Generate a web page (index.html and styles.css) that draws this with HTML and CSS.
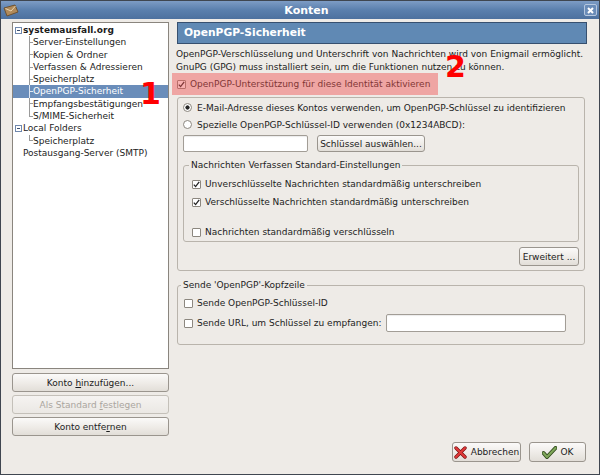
FILE: index.html
```html
<!DOCTYPE html>
<html lang="de">
<head>
    <meta charset="UTF-8">
    <title>Konten</title>
    <link rel="stylesheet" href="styles.css">
</head>
<body>
<div class="window">

    <!-- Title bar -->
    <div class="titlebar">
        <svg class="win-icon" width="16" height="13" viewBox="0 0 16 13">
            <path d="M1 4 L12 1 L15 8 L4 12 Z" fill="#b08a5a" stroke="#6e5230" stroke-width="1"/>
            <path d="M2.5 4.5 L8 7 L12.5 2" fill="none" stroke="#e8d4b0" stroke-width="1"/>
        </svg>
        <span class="title">Konten</span>
        <span class="close-btn">
            <svg width="11" height="11" viewBox="0 0 11 11">
                <path d="M3 3 L8 8 M8 3 L3 8" stroke="#fff" stroke-width="2"/>
            </svg>
        </span>
    </div>

    <div class="main">
        <!-- Account tree -->
        <div class="left">
            <div class="tree">
                <div class="row root bold"><span class="expander"></span>systemausfall.org</div>
                <div class="row child"><span class="branch"></span>Server-Einstellungen</div>
                <div class="row child"><span class="branch"></span>Kopien &amp; Ordner</div>
                <div class="row child"><span class="branch"></span>Verfassen &amp; Adressieren</div>
                <div class="row child"><span class="branch"></span>Speicherplatz</div>
                <div class="row child selected"><span class="branch"></span>OpenPGP-Sicherheit</div>
                <div class="row child"><span class="branch"></span>Empfangsbestätigungen</div>
                <div class="row child"><span class="branch last"></span>S/MIME-Sicherheit</div>
                <div class="row root"><span class="expander"></span>Local Folders</div>
                <div class="row child"><span class="branch last"></span>Speicherplatz</div>
                <div class="row root"><span class="spacer"></span>Postausgang-Server (SMTP)</div>
            </div>
            <div class="left-buttons">
                <button class="btn">Konto <u>h</u>inzufügen...</button>
                <button class="btn" disabled>Als Standard <u>f</u>estlegen</button>
                <button class="btn">Konto entfe<u>r</u>nen</button>
            </div>
        </div>

        <!-- Settings page -->
        <div class="right">
            <div class="page-header">OpenPGP-Sicherheit</div>
            <p class="desc">OpenPGP-Verschlüsselung und Unterschrift von Nachrichten wird von Enigmail ermöglicht.<br>GnuPG (GPG) muss installiert sein, um die Funktionen nutzen zu können.</p>

            <div class="check-row highlight">
                <span class="box"><svg width="7" height="7" viewBox="0 0 7 7"><path d="M0.8 3.6 L2.6 5.6 L6.2 0.8" fill="none" stroke="#222" stroke-width="1.3"/></svg></span>
                OpenPGP-Unterstützung für diese Identität aktivieren
            </div>

            <div class="frame">
                <div class="radio-row"><span class="radio on"></span>E-Mail-Adresse dieses Kontos verwenden, um OpenPGP-Schlüssel zu identifizieren</div>
                <div class="radio-row"><span class="radio"></span>Spezielle OpenPGP-Schlüssel-ID verwenden (0x1234ABCD):</div>
                <div class="key-row">
                    <span class="field key-field"></span>
                    <button class="btn small">Schlüssel auswählen...</button>
                </div>

                <fieldset class="group compose">
                    <legend>Nachrichten Verfassen Standard-Einstellungen</legend>
                    <div class="check-row">
                        <span class="box"><svg width="7" height="7" viewBox="0 0 7 7"><path d="M0.8 3.6 L2.6 5.6 L6.2 0.8" fill="none" stroke="#222" stroke-width="1.3"/></svg></span>
                        Unverschlüsselte Nachrichten standardmäßig unterschreiben
                    </div>
                    <div class="check-row">
                        <span class="box"><svg width="7" height="7" viewBox="0 0 7 7"><path d="M0.8 3.6 L2.6 5.6 L6.2 0.8" fill="none" stroke="#222" stroke-width="1.3"/></svg></span>
                        Verschlüsselte Nachrichten standardmäßig unterschreiben
                    </div>
                    <div class="check-row spaced">
                        <span class="box"></span>
                        Nachrichten standardmäßig verschlüsseln
                    </div>
                </fieldset>

                <div class="advanced">
                    <button class="btn small adv-btn">Erweitert ...</button>
                </div>
            </div>

            <fieldset class="group header-group">
                <legend>Sende 'OpenPGP'-Kopfzeile</legend>
                <div class="check-row">
                    <span class="box"></span>
                    Sende OpenPGP-Schlüssel-ID
                </div>
                <div class="check-row url-row">
                    <span class="box"></span>
                    Sende URL, um Schlüssel zu empfangen:
                    <span class="field url-field"></span>
                </div>
            </fieldset>

            <div class="dialog-buttons">
                <button class="btn dlg cancel">
                    <svg width="13" height="13" viewBox="0 0 13 13">
                        <path d="M2 2 L11 11 M11 2 L2 11" stroke="#7a0f0f" stroke-width="3.4" stroke-linecap="round"/>
                        <path d="M2 2 L11 11 M11 2 L2 11" stroke="#e23a3a" stroke-width="2" stroke-linecap="round"/>
                    </svg>
                    Abbrechen
                </button>
                <button class="btn dlg ok">
                    <svg width="15" height="13" viewBox="0 0 15 13">
                        <path d="M1.5 7 L5 11 L13.5 2" fill="none" stroke="#2f4a1c" stroke-width="4" stroke-linecap="round" stroke-linejoin="round"/>
                        <path d="M1.5 7 L5 11 L13.5 2" fill="none" stroke="#7fa65a" stroke-width="2.2" stroke-linecap="round" stroke-linejoin="round"/>
                    </svg>
                    OK
                </button>
            </div>
        </div>
    </div>

    <!-- Annotation numbers -->
    <span class="marker m1">1</span>
    <span class="marker m2">2</span>
</div>
</body>
</html>
```

FILE: styles.css
```css
body {
    margin: 0;
    background: #fff;
    font-family: "DejaVu Sans", sans-serif;
    font-size: 9px;
    color: #1c1c1c;
}
.window {
    width: 600px;
    height: 475px;
    box-sizing: border-box;
    border: 1px solid #3f4650;
    background: #eeebe7;
    display: flex;
    flex-direction: column;
    position: relative;
    overflow: hidden;
}

/* Title bar */
.titlebar {
    height: 18px;
    flex: none;
    display: flex;
    align-items: center;
    background: linear-gradient(#7d9cc5, #5a7fad 50%, #4d719f);
    color: #fff;
}
.win-icon {
    margin-left: 2px;
}
.title {
    flex: 1;
    text-align: center;
    font-weight: bold;
    font-size: 11px;
    padding-left: 10px;
}
.close-btn {
    width: 13px;
    height: 12px;
    box-sizing: border-box;
    border: 1px solid #b5c7df;
    border-radius: 2px;
    background: #6a8cb8;
    margin-right: 2px;
    display: flex;
    align-items: center;
    justify-content: center;
}

.main {
    flex: 1;
    display: flex;
    padding: 3px 12px 12px 11px;
}

/* Left column */
.left {
    width: 157px;
    display: flex;
    flex-direction: column;
}
.tree {
    height: 347px;
    box-sizing: border-box;
    border: 1px solid #8a857e;
    background: #fff;
    padding-top: 1px;
}
.row {
    height: 12.3px;
    line-height: 12.3px;
    display: flex;
    align-items: center;
    white-space: nowrap;
    padding-left: 2px;
}
.row.bold {
    font-weight: bold;
}
.row.child {
    padding-left: 10px;
}
.row.selected {
    background: #6a8dba;
    color: #fff;
}
.expander {
    width: 7px;
    height: 7px;
    box-sizing: border-box;
    border: 1px solid #7088ad;
    background: linear-gradient(#3a4f70, #3a4f70) center / 3px 1px no-repeat, #fff;
    margin-right: 1px;
}
.spacer {
    width: 8px;
}
.branch {
    width: 10px;
    align-self: stretch;
    background:
        linear-gradient(#9a9a9a, #9a9a9a) 6px 0 / 1px 100% no-repeat,
        linear-gradient(#9a9a9a, #9a9a9a) 6px 50% / 4px 1px no-repeat;
}
.branch.last {
    background:
        linear-gradient(#9a9a9a, #9a9a9a) 6px 0 / 1px 50% no-repeat,
        linear-gradient(#9a9a9a, #9a9a9a) 6px 50% / 4px 1px no-repeat;
}
.selected .branch {
    background:
        linear-gradient(#dfe7f2, #dfe7f2) 6px 0 / 1px 100% no-repeat,
        linear-gradient(#dfe7f2, #dfe7f2) 6px 50% / 4px 1px no-repeat;
}
.left-buttons {
    margin-top: 4px;
    display: flex;
    flex-direction: column;
    gap: 3px;
}

/* Buttons */
.btn {
    font: inherit;
    color: #1c1c1c;
    height: 19px;
    box-sizing: border-box;
    border: 1px solid #9a958e;
    border-radius: 3px;
    background: linear-gradient(#fbfaf9, #eeebe7 55%, #e2ded8);
    padding: 0;
    text-align: center;
}
.btn:disabled {
    color: #aaa59e;
    border-color: #c4c0b9;
    background: linear-gradient(#f5f3f1, #ebe8e4);
}
.btn.small {
    height: 17px;
}

/* Right column */
.right {
    flex: 1;
    margin-left: 3px;
    padding-left: 5px;
    display: flex;
    flex-direction: column;
}
.page-header {
    height: 22px;
    box-sizing: border-box;
    border: 1px solid #37506f;
    background: #6089b4;
    color: #fff;
    font-weight: bold;
    font-size: 10.7px;
    line-height: 20px;
    padding-left: 6px;
}
.desc {
    margin: 4px 0 0 -1px;
    line-height: 12.5px;
    white-space: nowrap;
}
.check-row {
    display: flex;
    align-items: center;
    height: 18px;
    white-space: nowrap;
}
.box {
    width: 9px;
    height: 9px;
    box-sizing: border-box;
    border: 1px solid #8c877f;
    border-radius: 1px;
    background: #fff;
    margin-right: 4px;
    display: flex;
    align-items: center;
    justify-content: center;
    flex: none;
}
.highlight {
    position: relative;
    width: 266px;
    height: 22px;
    margin-left: -5px;
    padding-left: 5px;
    box-sizing: border-box;
}
.highlight::after {
    content: "";
    position: absolute;
    left: 0;
    top: 0;
    right: 0;
    bottom: 0;
    background: rgba(240, 80, 80, 0.45);
}

.frame {
    margin: 2px 2px 0 0;
    border: 1px solid #b9b4ac;
    border-radius: 3px;
    padding: 1px 5px 4px 5px;
}
.radio-row {
    display: flex;
    align-items: center;
    height: 17px;
    white-space: nowrap;
}
.radio {
    width: 9px;
    height: 9px;
    box-sizing: border-box;
    border: 1px solid #8c877f;
    border-radius: 50%;
    background: #fff;
    margin-right: 5px;
}
.radio.on {
    background: radial-gradient(circle, #262626 0 1.8px, #fff 2.4px);
}
.key-row {
    display: flex;
    margin-top: 2px;
}
.field {
    height: 17px;
    box-sizing: border-box;
    border: 1px solid #a29d96;
    border-radius: 2px;
    background: #fff;
    box-shadow: inset 0 1px 1px rgba(0, 0, 0, 0.08);
}
.key-field {
    width: 125px;
}
.key-row .btn {
    width: 108px;
    margin-left: 9px;
}

.group {
    margin: 0;
    border: 1px solid #b9b4ac;
    border-radius: 3px;
    min-width: 0;
}
.group legend {
    padding: 0 2px;
    line-height: 12px;
}
.compose {
    margin-top: 7px;
    padding: 4px 0 0 5px;
}
.compose .check-row {
    padding-left: 3px;
}
.compose .spaced {
    margin-top: 12px;
}
.advanced {
    display: flex;
    justify-content: flex-end;
    margin-top: 5px;
}
.adv-btn.small {
    width: 60px;
    height: 19px;
}

.header-group {
    margin: 8px 2px 0 0;
    padding: 3px 0 11px 3px;
}
.header-group .check-row {
    padding-left: 3px;
}
.url-row {
    height: 20px;
    margin-top: 1px;
}
.url-field {
    width: 180px;
    height: 18px;
    margin-left: 4px;
}

/* Dialog buttons */
.dialog-buttons {
    margin-top: auto;
    display: flex;
    justify-content: flex-end;
    gap: 8px;
    margin-right: 1px;
}
.btn.dlg {
    height: 20px;
    display: flex;
    align-items: center;
    justify-content: center;
    gap: 4px;
}
.cancel {
    width: 69px;
}
.ok {
    width: 57px;
    gap: 6px;
}

/* Red annotation numbers */
.marker {
    position: absolute;
    color: #f00;
    font-weight: bold;
    font-size: 30px;
    line-height: 30px;
}
.m1 {
    left: 139px;
    top: 78px;
}
.m2 {
    left: 444px;
    top: 51px;
}
```
